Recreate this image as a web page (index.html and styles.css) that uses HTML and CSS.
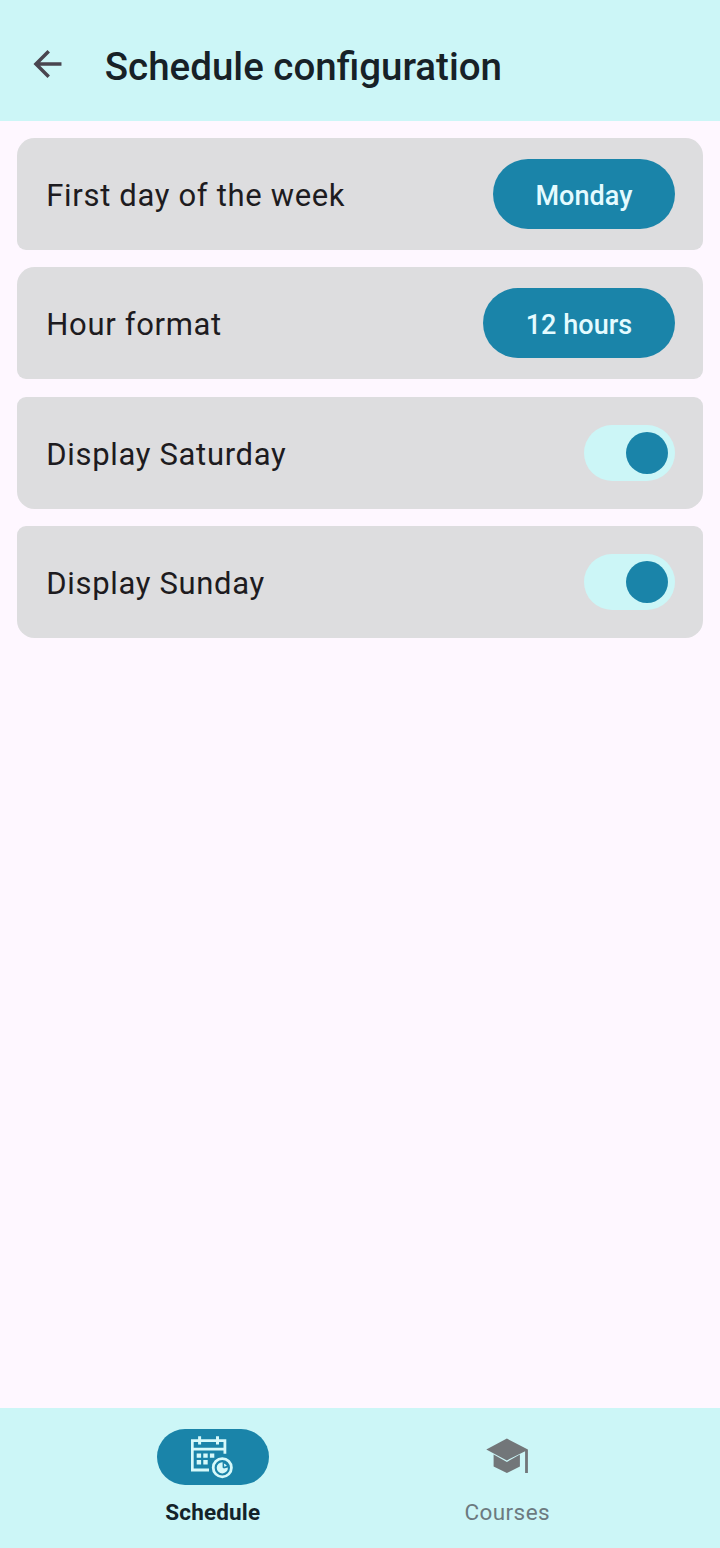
FILE: index.html
```html
<!DOCTYPE html>
<html lang="en">
<head>
<meta charset="utf-8">
<title>Schedule configuration</title>
<link rel="stylesheet" href="styles.css">
</head>
<body>
<div class="screen">
  <header class="top-bar">
    <button class="back" aria-label="Back">
      <svg width="42" height="42" viewBox="0.3 0 24 24"><path d="M20 11H7.83l5.59-5.59L12 4l-8 8 8 8 1.41-1.41L7.83 13H20z"/></svg>
    </button>
    <h1 class="title">Schedule configuration</h1>
  </header>
  <main class="settings">
    <section class="card card-upper">
      <span class="label">First day of the week</span>
      <button class="choice choice-day">Monday</button>
    </section>
    <section class="card card-upper">
      <span class="label">Hour format</span>
      <button class="choice choice-hours">12 hours</button>
    </section>
    <section class="card card-lower">
      <span class="label">Display Saturday</span>
      <span class="switch" role="switch" aria-checked="true"><span class="thumb"></span></span>
    </section>
    <section class="card card-lower">
      <span class="label">Display Sunday</span>
      <span class="switch" role="switch" aria-checked="true"><span class="thumb"></span></span>
    </section>
  </main>
  <nav class="bottom-bar">
    <a class="tab tab-active">
      <span class="tab-icon">
        <svg width="44" height="44" viewBox="0.3 -1.2 44 44">
          <g fill="none" stroke="#d6f9fa" stroke-width="2.8">
            <path d="M18.3 33.8H1.6V4.4H34.2V17.5M1.6 13H34.2"/>
            <path stroke-width="3" d="M8.9 0V8.4M26.8 0V8.4"/>
            <circle cx="31.6" cy="31.5" r="9.1"/>
          </g>
          <g fill="#d6f9fa">
            <path d="M6 17.2h4.4v4.4H6zM12.6 17.2h4.4v4.4h-4.4zM19.2 17.2h4.4v4.4h-4.4zM6 23.8h4.4v4.4H6zM12.6 23.8h4.4v4.4h-4.4z"/>
            <path d="M31.9 26A5.6 5.6 0 1 0 37.2 31.2L33.2 32.4 31.9 31.2z"/>
            <path d="M33.2 27.2A5.6 5.6 0 0 1 36.2 29.6L33.6 30.6z"/>
          </g>
        </svg>
      </span>
      <span class="tab-label">Schedule</span>
    </a>
    <a class="tab">
      <span class="tab-icon">
        <svg width="44" height="44" viewBox="-0.5 -1 44 44" fill="#727679">
          <path d="M.8 13.6L21.4 2.6 42.4 13.6V37H39.6V15.2L21.4 24.4z"/>
          <path d="M8.1 18.6L21.4 25.9 34.4 18.6V30.6L21.4 37 8.1 30.6z"/>
        </svg>
      </span>
      <span class="tab-label">Courses</span>
    </a>
  </nav>
</div>
</body>
</html>
```
FILE: styles.css
```css
* {
  box-sizing: border-box;
}

body {
  margin: 0;
  font-family: Roboto, "Liberation Sans", sans-serif;
}

button {
  border: 0;
  padding: 0;
  background: none;
  font: inherit;
}

svg {
  display: block;
}

.screen {
  display: flex;
  flex-direction: column;
  width: 720px;
  height: 1548px;
  background: #fef7ff;
}

.top-bar {
  display: flex;
  align-items: center;
  height: 121px;
  padding: 8px 0 0 26.5px;
  background: #ccf6f7;
}

.back {
  width: 42px;
  margin-bottom: 2px;
  fill: #49454f;
}

.title {
  margin: 4px 0 0 36.3px;
  font-size: 38.5px;
  font-weight: 500;
  line-height: 50px;
  color: #172127;
  white-space: nowrap;
}

.settings {
  display: flex;
  flex: 1;
  flex-direction: column;
  gap: 17.4px;
  padding: 17px 17.3px 0;
}

.card {
  display: flex;
  align-items: center;
  justify-content: space-between;
  height: 112px;
  padding: 0 28px 0 29px;
  background: #dddddf;
}

.card-upper {
  border-radius: 17.5px 17.5px 9px 9px;
}

.card-lower {
  border-radius: 9px 9px 17.5px 17.5px;
}

.label {
  padding-top: 4px;
  font-size: 31px;
  letter-spacing: 0.67px;
  line-height: 42px;
  color: #1d1b20;
  white-space: nowrap;
}

.choice {
  height: 70px;
  padding-top: 3px;
  border-radius: 35px;
  background: #1a84a9;
  font-size: 27px;
  font-weight: 500;
  letter-spacing: 0.05px;
  color: #e4fbff;
}

.choice-day {
  width: 181.5px;
}

.choice-hours {
  width: 191.5px;
}

.switch {
  display: flex;
  align-items: center;
  justify-content: flex-end;
  width: 91px;
  height: 56px;
  padding-right: 7px;
  border-radius: 28px;
  background: #ccf6f7;
}

.thumb {
  width: 42px;
  height: 42px;
  border-radius: 50%;
  background: #1a84a9;
}

.bottom-bar {
  display: flex;
  justify-content: center;
  height: 140px;
  padding-top: 21px;
  background: #ccf6f7;
}

.tab {
  display: flex;
  flex-direction: column;
  align-items: center;
  width: 294.5px;
  color: #6c7a80;
}

.tab-icon {
  display: flex;
  align-items: center;
  justify-content: center;
  width: 112px;
  height: 56px;
  border-radius: 28px;
}

.tab-label {
  margin-top: 13px;
  font-size: 22.5px;
  letter-spacing: 0.4px;
  line-height: 28px;
}

.tab-active {
  color: #14232a;
}

.tab-active .tab-icon {
  background: #1a84a9;
}

.tab-active .tab-label {
  font-weight: 700;
  letter-spacing: 0.15px;
}
```
